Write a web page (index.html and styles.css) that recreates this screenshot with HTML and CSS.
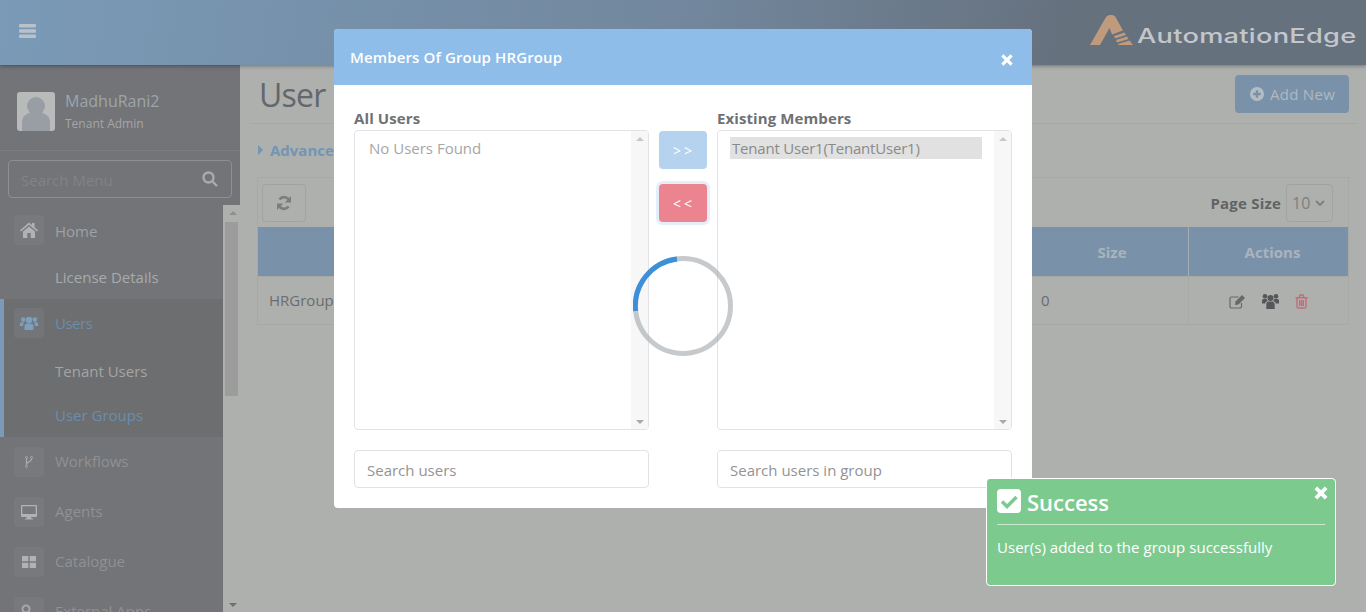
FILE: index.html
```html
<!DOCTYPE html>
<html lang="en">
<head>
<meta charset="utf-8">
<title>User Groups</title>
<link rel="stylesheet" href="styles.css">
</head>
<body>
<header class="topbar">
  <svg class="burger" viewBox="0 0 17 14"><path d="M1 0h15a1 1 0 0 1 1 1v1.4a1 1 0 0 1-1 1H1a1 1 0 0 1-1-1V1a1 1 0 0 1 1-1zM1 5.300h15a1 1 0 0 1 1 1v1.400a1 1 0 0 1-1 1H1a1 1 0 0 1-1-1V6.300a1 1 0 0 1 1-1zM1 10.600h15a1 1 0 0 1 1 1V13a1 1 0 0 1-1 1H1a1 1 0 0 1-1-1v-1.400a1 1 0 0 1 1-1z"/></svg>
  <div class="logo">
    <svg class="logo-mark" viewBox="0 0 43 30"><path class="mark-a" d="M0 30 L16 2 Q18 0 20 0 H22 Q24 0 25.500 2 L33 15.500 L22 19.500 L19.500 13 L10 30 Z"/><path class="mark-a" d="M24 21 L34.500 17.500 L36 20 L25 23.500 Z M26 25 L37 21.500 L38.500 24 L27 27.500 Z M28 29 L39.500 25.500 L43 30 L28.500 30 Z"/></svg>
    <span class="logo-text">AutomationEdge</span>
  </div>
</header>

<div class="shell">
  <aside class="sidebar">
    <div class="profile">
      <div class="avatar">
        <svg viewBox="0 0 38 39"><circle cx="19" cy="14" r="9"/><path d="M5 39v-9c0-6 5-9 10-9.500 2.500 1.500 5.500 1.500 8 0 5 .5 10 3.500 10 9.500v9z"/></svg>
      </div>
      <div class="profile-text">
        <div class="profile-name">MadhuRani2</div>
        <div class="profile-role">Tenant Admin</div>
      </div>
    </div>
    <div class="menu-search">
      <span>Search Menu</span>
      <svg class="menu-search-icon" viewBox="0 0 16 16"><circle cx="6.500" cy="6.500" r="5" /><path d="M10.500 10.500 L15 15"/></svg>
    </div>
    <nav class="menu">
      <div class="menu-item first">
        <span class="menu-icon"><svg viewBox="0 0 20 20"><path d="M10 2.500 L1 10.200 L2 11.400 L10 4.700 L18 11.400 L19 10.200 L15.500 7.200 V3 H13 V5 Z M4 11.500 V18 H8.300 V13 H11.700 V18 H16 V11.500 L10 6.400 Z"/></svg></span>
        <span class="menu-label">Home</span>
      </div>
      <div class="menu-sub license">License Details</div>
      <div class="menu-group">
        <div class="menu-item active">
          <span class="menu-icon"><svg viewBox="0 0 20 20"><circle cx="10" cy="7" r="3.200"/><circle cx="4.200" cy="6.600" r="2.300"/><circle cx="15.800" cy="6.600" r="2.300"/><path d="M5.500 17 v-3.800 c0-2 1.500-2.700 2.700-2.700 h3.600 c1.200 0 2.700.7 2.700 2.700 V17 Z M0.800 13 v-2 c0-1.200 1-1.800 2-1.800 h2.400 c-.8.700-1 1.500-1 2.800 v1 Z M19.200 13 v-2 c0-1.200-1-1.800-2-1.800 h-2.400 c.8.700 1 1.500 1 2.800 v1 Z"/></svg></span>
          <span class="menu-label">Users</span>
        </div>
        <div class="menu-sub tenant">Tenant Users</div>
        <div class="menu-sub current">User Groups</div>
      </div>
      <div class="menu-item">
        <span class="menu-icon"><svg class="fork" viewBox="0 0 8 12"><path class="line" d="M1.500 2 V10 M6.500 2 V3.500 C6.500 5.500 2.500 5.500 1.500 8"/><circle cx="1.500" cy="1.500" r="1" class="ring"/><circle cx="1.500" cy="10.500" r="1" class="ring"/><circle cx="6.500" cy="1.500" r="1" class="ring"/></svg></span>
        <span class="menu-label">Workflows</span>
      </div>
      <div class="menu-item">
        <span class="menu-icon"><svg viewBox="0 0 20 20"><path fill-rule="evenodd" d="M3 3 H17 a1 1 0 0 1 1 1 V14 a1 1 0 0 1-1 1 H12 L12.500 16.500 H14 V17.500 H6 V16.500 H7.500 L8 15 H3 a1 1 0 0 1-1-1 V4 a1 1 0 0 1 1-1 Z M3.300 4.300 V12 H16.700 V4.300 Z"/></svg></span>
        <span class="menu-label">Agents</span>
      </div>
      <div class="menu-item">
        <span class="menu-icon"><svg viewBox="0 0 20 20"><path d="M3 4 H9.300 V9.300 H3 Z M10.700 4 H17 V9.300 H10.700 Z M3 10.700 H9.300 V16 H3 Z M10.700 10.700 H17 V16 H10.700 Z"/></svg></span>
        <span class="menu-label">Catalogue</span>
      </div>
      <div class="menu-item">
        <span class="menu-icon"><svg viewBox="0 0 20 20"><circle cx="7" cy="7" r="3.500" class="ring thick"/><path d="M9.500 9.500 L16 16 M13 13 L15 11 M15 15 L17 13" class="line thick"/></svg></span>
        <span class="menu-label">External Apps</span>
      </div>
    </nav>
    <div class="side-scroll">
      <span class="arrow up"></span>
      <span class="side-thumb"></span>
      <span class="arrow down"></span>
    </div>
  </aside>

  <main class="content">
    <div class="title-row">
      <h1>User Groups</h1>
      <button class="add-btn"><svg viewBox="0 0 14 14"><circle cx="7" cy="7" r="7"/><path class="plus" d="M3.200 5.800 H5.800 V3.200 H8.200 V5.800 H10.800 V8.200 H8.200 V10.800 H5.800 V8.200 H3.200 Z"/></svg><span class="add-label">Add New</span></button>
    </div>
    <div class="advanced"><span class="caret"></span>Advanced Search</div>
    <section class="card">
      <div class="toolbar">
        <button class="refresh"><svg viewBox="0 0 16 16"><path d="M13.500 6.500 A5.600 5.600 0 0 0 3.500 4.500 M2.500 9.500 A5.600 5.600 0 0 0 12.500 11.500" class="line wide"/><path d="M15 1 V7.500 H8.800 Z M1 15 V8.500 H7.200 Z"/></svg></button>
        <div class="page-size">
          <b>Page Size</b>
          <span class="size-select">10<svg viewBox="0 0 10 6"><path d="M1 1 L5 5 L9 1"/></svg></span>
        </div>
      </div>
      <div class="table-row head">
        <div class="cell name"></div>
        <div class="cell size">Size</div>
        <div class="cell actions">Actions</div>
      </div>
      <div class="table-row body">
        <div class="cell name">HRGroup</div>
        <div class="cell size">0</div>
        <div class="cell actions">
          <svg class="act" viewBox="0 0 17 15"><path class="line" d="M12.500 9 V12.500 a1.500 1.500 0 0 1-1.500 1.500 H2.500 A1.500 1.500 0 0 1 1 12.500 V4.500 A1.500 1.500 0 0 1 2.500 3 H9.500"/><path d="M6.500 7.500 L13 1 L16 4 L9.500 10.500 L6 11 Z"/></svg>
          <svg class="act dark" viewBox="0 0 17 16"><circle cx="8.500" cy="5" r="3"/><circle cx="3" cy="3.200" r="2.300"/><circle cx="14" cy="3.200" r="2.300"/><path d="M4.300 16 v-4.500 c0-2 1.300-3 2.600-3 h3.200 c1.300 0 2.600 1 2.600 3 V16 Z M0 10.500 v-2.500 c0-1.400 1-2.200 2-2.200 h2.500 c.3 1 .8 1.800 1.500 2.300 c-1.800.5-2.600 1.400-2.800 2.400 Z M17 10.500 v-2.500 c0-1.400-1-2.200-2-2.200 h-2.500 c-.3 1-.8 1.800-1.500 2.300 c1.800.5 2.600 1.400 2.800 2.400 Z"/></svg>
          <svg class="act red" viewBox="0 0 13 15"><path class="line" d="M2 4.500 V12.500 a1.500 1.500 0 0 0 1.500 1.500 H9.500 a1.500 1.500 0 0 0 1.500-1.500 V4.500 M0.500 3.700 H12.500 M4.200 3.500 L5 1 H8 L8.800 3.500 M4.700 6 V12 M6.500 6 V12 M8.300 6 V12"/></svg>
        </div>
      </div>
    </section>
  </main>
</div>

<div class="modal">
  <div class="modal-head">
    <span>Members Of Group HRGroup</span>
    <svg class="modal-close" viewBox="0 0 12 12"><path d="M2 2 L10 10 M10 2 L2 10"/></svg>
  </div>
  <div class="modal-body">
    <div class="picker">
      <label>All Users</label>
      <div class="listbox">
        <div class="list-items"><div class="empty">No Users Found</div></div>
        <div class="list-scroll"><span class="arrow up"></span><span class="arrow down"></span></div>
      </div>
      <div class="search-field">Search users</div>
    </div>
    <div class="transfer">
      <button class="move add">&gt;&gt;</button>
      <button class="move remove">&lt;&lt;</button>
    </div>
    <div class="picker">
      <label>Existing Members</label>
      <div class="listbox">
        <div class="list-items"><div class="member">Tenant User1(TenantUser1)</div></div>
        <div class="list-scroll"><span class="arrow up"></span><span class="arrow down"></span></div>
      </div>
      <div class="search-field">Search users in group</div>
    </div>
  </div>
  <svg class="spinner" viewBox="0 0 100 100"><circle class="spin-track" cx="50" cy="50" r="47.500"/><path class="spin-arc" d="M44 2.900 A47.500 47.500 0 0 0 2.600 55"/></svg>
</div>

<div class="toast">
  <svg class="toast-close" viewBox="0 0 14 14"><path d="M2.500 2.500 L11.500 11.500 M11.500 2.500 L2.500 11.500"/></svg>
  <div class="toast-title">
    <svg viewBox="0 0 24 24"><rect width="24" height="24" rx="4"/><path class="tick" d="M5 12.500 L10 17.500 L19.500 8" /></svg>
    <span>Success</span>
  </div>
  <div class="toast-msg">User(s) added to the group successfully</div>
</div>
</body>
</html>
```

FILE: styles.css
```css
* { box-sizing: border-box; }
html, body { height: 100%; }
body {
  margin: 0;
  overflow: hidden;
  background: #aeb0ae;
  color: #6a6c6e;
  font: 15px "Open Sans", "Noto Sans", sans-serif;
}
button { font: inherit; cursor: pointer; }

/* top bar */
.topbar {
  height: 65px;
  display: flex;
  align-items: center;
  justify-content: space-between;
  padding: 0 10px 0 19px;
  background: linear-gradient(100deg, #7a9ab7 0%, #72879d 50%, #66717e 78%, #66717e 100%);
  box-shadow: 0 1px 4px rgba(0,0,0,.35);
  position: relative;
  z-index: 2;
}
.burger { width: 17px; height: 14px; fill: #b9c2ca; margin-top: -4px; }
.logo { display: flex; align-items: flex-end; gap: 4px; margin-top: -6px; }
.logo-mark { width: 43px; height: 30px; }
.mark-a { fill: #c09a7c; }
.logo-text {
  font: 500 20px/24px "Inter", sans-serif;
  letter-spacing: .2px;
  color: #c3c6ca;
  transform: scaleX(1.36);
  transform-origin: left bottom;
  width: 161px;
  margin-right: 58px;
  white-space: nowrap;
  margin-bottom: -3px;
}

.shell { display: flex; height: 547px; }

/* sidebar */
.sidebar {
  width: 240px;
  flex: none;
  position: relative;
  background: #727478;
  overflow: hidden;
  color: #a9aaab;
}
.profile {
  height: 86px;
  display: flex;
  align-items: flex-start;
  gap: 10px;
  padding: 27px 0 0 17px;
  border-bottom: 1px solid #7a7c80;
}
.avatar { width: 38px; height: 39px; background: #b9bbba; border-radius: 3px; overflow: hidden; }
.avatar svg { display: block; width: 38px; height: 39px; fill: #999ea4; }
.profile-name { font-size: 16px; line-height: 22px; margin-top: -2px; color: #9fa4aa; }
.profile-role { font-size: 12px; line-height: 18px; margin-top: 3px; color: #a4a6a8; }
.menu-search {
  margin: 9px 8px 0;
  width: 224px;
  height: 38px;
  border: 1px solid #8d8f92;
  border-radius: 4px;
  display: flex;
  align-items: center;
  justify-content: space-between;
  padding: 0 13px 0 12px;
  color: #818386;
}
.menu-search span { margin-top: 2px; }
.menu-search-icon { width: 16px; height: 16px; fill: none; stroke: #a8aaab; stroke-width: 2.400; }
.menu { width: 223px; padding-top: 17px; font-size: 15px; }
.menu-item { height: 50px; display: flex; align-items: center; gap: 11px; padding-left: 14px; color: #909193; }
.menu-label { margin-top: -2px; }
.menu-item.first { height: 30px; color: #a0a1a3; }
.menu-item.first .menu-label { margin-top: 2px; }
.menu-icon {
  width: 30px;
  height: 30px;
  flex: none;
  display: flex;
  align-items: center;
  justify-content: center;
  background: #77797c;
  border-radius: 4px;
}
.menu-icon svg { width: 20px; height: 20px; fill: #b0b2b3; }
.menu-icon .fork { width: 8px; height: 12px; fill: none; }
.menu-icon .line { fill: none; stroke: #a6a8a9; stroke-width: 1.300; }
.menu-icon .ring { fill: none; stroke: #a6a8a9; stroke-width: 1; }
.menu-icon .thick { stroke-width: 2; }
.menu-sub { padding-left: 55px; line-height: 22px; }
.license { margin-top: 21px; }
.menu-group {
  margin-top: 11px;
  height: 138px;
  background: #6d6e70;
  box-shadow: inset 4px 0 0 #7a9ab7;
}
.menu-item.active { height: 48px; color: #6b8caa; letter-spacing: -.5px; }
.menu-item.active .menu-label { margin-top: 0; }
.menu-item.active .menu-icon { background: #737578; }
.menu-item.active svg { fill: #7d9fbe; }
.tenant { margin-top: 13px; color: #a4a5a6; }
.current { margin-top: 22px; color: #6b8dad; }

.side-scroll {
  position: absolute;
  right: 0;
  top: 140px;
  bottom: 0;
  width: 17px;
  background: #aeb0ae;
  border-left: 2px solid #aeb0ae;
}
.side-thumb { position: absolute; left: 0; width: 13px; top: 17px; height: 174px; background: #9b9c9b; }
.arrow { position: absolute; left: 50%; width: 0; height: 0; margin-left: -4px; border-left: 4px solid transparent; border-right: 4px solid transparent; }
.arrow.up { top: 6px; border-bottom: 4px solid #8f908f; }
.arrow.down { bottom: 5px; border-top: 4px solid #6e6f6f; }

/* page */
.content { flex: 1; min-width: 0; padding: 0 9px 0 10px; }
.title-row {
  height: 59px;
  display: flex;
  align-items: flex-start;
  justify-content: space-between;
  border-bottom: 1px solid #a7a9a7;
  padding: 10px 8px 0 9px;
}
h1 { margin: 0; font-size: 32px; line-height: 40px; font-weight: 500; letter-spacing: -.8px; color: #64676b; }
.add-btn {
  width: 114px;
  height: 38px;
  border: 0;
  border-radius: 4px;
  background: #7a92a9;
  color: #aeb9c2;
  font-size: 15px;
  letter-spacing: .3px;
  display: flex;
  align-items: center;
  justify-content: center;
  gap: 6px;
  padding: 0 0 0 1px;
}
.add-label { margin-top: -1px; }
.add-btn svg { width: 14px; height: 14px; fill: #b5bdc3; }
.add-btn .plus { fill: #7a92a9; }
.advanced { margin: 15px 0 0 8px; display: flex; align-items: center; gap: 7px; font-size: 15px; font-weight: 700; color: #7394b3; line-height: 22px; }
.caret { border-left: 5px solid #7394b3; border-top: 5px solid transparent; border-bottom: 5px solid transparent; }
.card { margin: 16px 0 0 7px; width: 1092px; height: 148px; border: 1px solid #a7a9a7; }
.toolbar {
  height: 49px;
  display: flex;
  align-items: center;
  justify-content: space-between;
  padding: 0 15px 0 4px;
}
.refresh { width: 44px; height: 38px; border: 1px solid #a1a3a1; border-radius: 4px; background: #aeb0ae; display: flex; align-items: center; justify-content: center; padding: 0; }
.refresh svg { width: 16px; height: 16px; fill: #7b7d7e; }
.refresh .wide { fill: none; stroke: #7b7d7e; stroke-width: 2.600; }
.page-size { display: flex; align-items: center; gap: 5px; color: #616365; }
.page-size b { font-weight: 700; letter-spacing: .2px; }
.size-select { width: 47px; height: 38px; border: 1px solid #a1a3a1; border-radius: 4px; display: flex; align-items: center; justify-content: space-between; padding: 0 7px 0 5px; font-size: 16px; color: #7d7f80; }
.size-select svg { width: 10px; height: 6px; fill: none; stroke: #7d7f80; stroke-width: 1.800; }
.table-row { display: flex; }
.table-row.head { height: 49px; background: #7a92a9; color: #a9b4bd; font-weight: 700; }
.table-row.body { height: 49px; border-top: 1px solid #a7a9a7; padding-bottom: 2px; }
.cell { display: flex; align-items: center; }
.cell.name { flex: 1; padding-left: 11px; }
.cell.size { width: 154px; padding-left: 7px; }
.head .cell.size { justify-content: center; padding: 0 0 0 2px; }
.cell.actions { width: 160px; justify-content: center; gap: 16px; padding-right: 1px; border-left: 1px solid #a7a9a7; }
.head .cell.actions { border-left-color: #a4aeb6; padding: 0 0 0 8px; }
.body .cell.actions { margin-bottom: -2px; }
.act { width: 17px; height: 15px; fill: #66686a; }
.act .line { fill: none; stroke: #66686a; stroke-width: 1.200; }
.act.dark { height: 16px; fill: #55575a; }
.act.red { width: 13px; }
.act.red .line { stroke: #c66a78; stroke-width: 1.400; }

/* modal */
.modal {
  position: fixed;
  left: 334px;
  top: 29px;
  width: 698px;
  height: 479px;
  background: #fff;
  border-radius: 4px;
  overflow: hidden;
  z-index: 5;
}
.modal-head {
  height: 56px;
  background: #8dbde8;
  color: #fff;
  display: flex;
  align-items: center;
  justify-content: space-between;
  padding: 0 18px 0 16px;
  font-size: 15px;
  letter-spacing: .13px;
  font-weight: 600;
}
.modal-close { width: 14px; height: 14px; margin-top: 5px; fill: none; stroke: #fff; stroke-width: 2.800; }
.modal-body { display: flex; padding: 22px 20px 0; }
.picker { width: 295px; flex: none; }
.picker label { display: block; font-size: 15px; font-weight: 700; line-height: 23px; letter-spacing: .1px; color: #6f7174; }
.listbox {
  height: 300px;
  border: 1px solid #e2e2e8;
  border-radius: 4px;
  display: flex;
  overflow: hidden;
}
.list-items { flex: 1; padding: 6px 12px; font-size: 15px; }
.empty { padding-left: 2px; line-height: 22px; color: #a6a6a6; }
.member { background: #e1e1e1; line-height: 22px; padding-left: 2px; color: #8a8a8a; letter-spacing: -.2px; }
.list-scroll { width: 17px; background: #f7f7f7; position: relative; }
.list-scroll .arrow.up { border-bottom-color: #c8c8c8; top: 6px; }
.list-scroll .arrow.down { border-top-color: #a9a9a9; }
.search-field {
  margin-top: 20px;
  height: 38px;
  border: 1px solid #e2e2e2;
  border-radius: 4px;
  display: flex;
  align-items: center;
  padding: 2px 12px 0;
  font-size: 15px;
  color: #939393;
}
.transfer { width: 68px; flex: none; display: flex; flex-direction: column; align-items: center; gap: 15px; padding-top: 24px; }
.move { width: 48px; height: 38px; border: 0; border-radius: 4px; color: #fff; font-size: 14px; letter-spacing: 3px; padding: 0 0 0 2px; }
.move.add { background: #b5d3ef; }
.move.remove { background: #ec8490; box-shadow: 0 0 0 3px #e3eefa; }
.spinner { position: absolute; left: 299px; top: 227px; width: 100px; height: 100px; fill: none; stroke-width: 5; }
.spin-track { stroke: rgba(165,170,172,.62); }
.spin-arc { stroke: #3d8fd9; }

/* toast */
.toast {
  position: fixed;
  left: 986px;
  top: 478px;
  width: 350px;
  height: 108px;
  background: #7dca8f;
  border: 1px solid #fff;
  border-radius: 4px;
  padding: 10px 10px 0;
  color: #fff;
  z-index: 6;
}
.toast-close { position: absolute; right: 6px; top: 6px; width: 16px; height: 16px; fill: none; stroke: #fff; stroke-width: 3.200; }
.toast-title { display: flex; align-items: flex-start; gap: 6px; height: 36px; border-bottom: 1px solid #c9e9d0; font-size: 22px; line-height: 26px; font-weight: 600; }
.toast-title svg { width: 24px; height: 24px; fill: #fff; }
.toast-title .tick { fill: none; stroke: #7dca8f; stroke-width: 3.500; }
.toast-msg { margin-top: 12px; font-size: 15px; line-height: 20px; letter-spacing: .03px; }
```
